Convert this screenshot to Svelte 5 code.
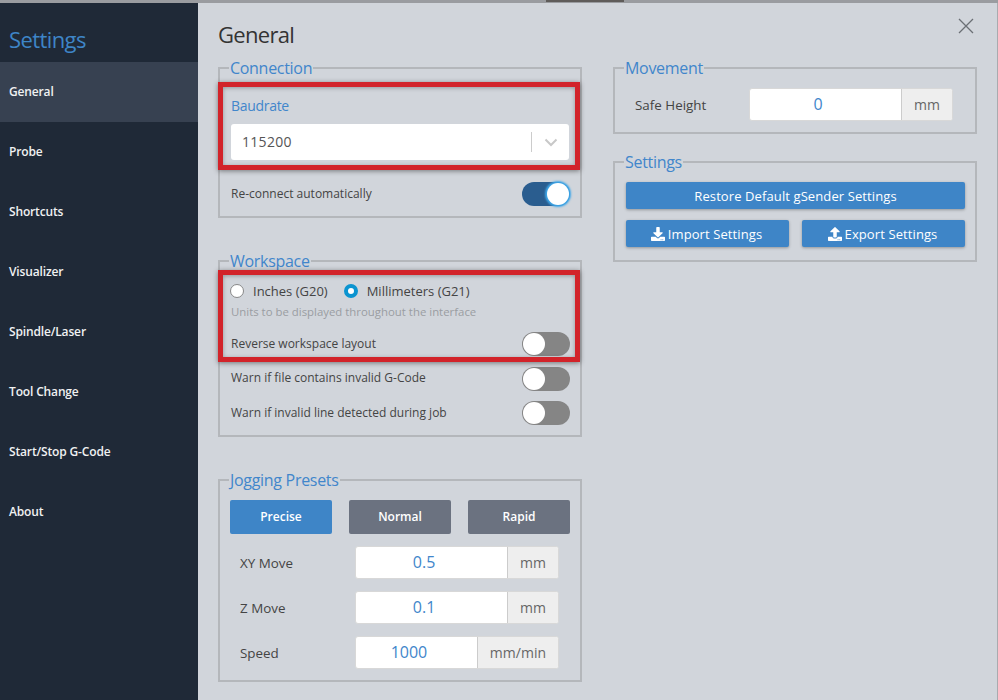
<script lang="ts">
	const navItems = ['General', 'Probe', 'Shortcuts', 'Visualizer', 'Spindle/Laser', 'Tool Change', 'Start/Stop G-Code', 'About'];
	const jogRows = [
		{ label: 'XY Move', value: '0.5', unit: 'mm' },
		{ label: 'Z Move', value: '0.1', unit: 'mm' },
		{ label: 'Speed', value: '1000', unit: 'mm/min' }
	];
</script>

<div class="modal">
	<div class="topstrip"></div>
	<div class="body">
		<nav class="sidebar">
			<h1 class="brand">Settings</h1>
			{#each navItems as item, i}
				<div class="nav-item" class:active={i === 0}>{item}</div>
			{/each}
		</nav>

		<main class="content">
			<button class="close" aria-label="Close">
				<svg width="16" height="16" viewBox="0 0 16 16"><path d="M1 1 L15 15 M15 1 L1 15" stroke="#6b6f75" stroke-width="1.3" fill="none" /></svg>
			</button>
			<h2 class="page-title">General</h2>

			<div class="columns">
				<div class="col">
					<fieldset class="connection">
						<legend>Connection</legend>
						<div class="field-label">Baudrate</div>
						<div class="select">
							<span>115200</span>
							<span class="sep"></span>
							<svg class="chev" width="14" height="9" viewBox="0 0 14 9"><path d="M1.5 1.5 L7 7 L12.5 1.5" stroke="#c8c8c8" stroke-width="2" fill="none" /></svg>
						</div>
						<div class="row reconnect">
							<span>Re-connect automatically</span>
							<span class="toggle on"><span class="knob"></span></span>
						</div>
						<div class="callout"></div>
					</fieldset>

					<fieldset class="workspace">
						<legend>Workspace</legend>
						<div class="radios">
							<span class="radio"></span><span class="radio-label">Inches (G20)</span>
							<span class="radio checked"></span><span class="radio-label">Millimeters (G21)</span>
						</div>
						<div class="hint">Units to be displayed throughout the interface</div>
						<div class="row"><span>Reverse workspace layout</span><span class="toggle"><span class="knob"></span></span></div>
						<div class="row"><span>Warn if file contains invalid G-Code</span><span class="toggle"><span class="knob"></span></span></div>
						<div class="row"><span>Warn if invalid line detected during job</span><span class="toggle"><span class="knob"></span></span></div>
						<div class="callout"></div>
					</fieldset>

					<fieldset class="jogging">
						<legend>Jogging Presets</legend>
						<div class="presets">
							<button class="preset selected">Precise</button>
							<button class="preset">Normal</button>
							<button class="preset">Rapid</button>
						</div>
						{#each jogRows as row}
							<div class="input-row">
								<span class="input-label">{row.label}</span>
								<div class="input-group">
									<span class="input-value">{row.value}</span>
									<span class="unit">{row.unit}</span>
								</div>
							</div>
						{/each}
					</fieldset>
				</div>

				<div class="col">
					<fieldset class="movement">
						<legend>Movement</legend>
						<div class="input-row">
							<span class="input-label">Safe Height</span>
							<div class="input-group">
								<span class="input-value">0</span>
								<span class="unit">mm</span>
							</div>
						</div>
					</fieldset>

					<fieldset class="settings">
						<legend>Settings</legend>
						<button class="action">Restore Default gSender Settings</button>
						<div class="action-row">
							<button class="action">
								<svg width="14" height="14" viewBox="0 0 512 512"><path fill="#fff" d="M216 0h80c13.3 0 24 10.7 24 24v168h87.7c17.8 0 26.7 21.5 14.1 34.1L269.7 378.3c-7.5 7.5-19.8 7.5-27.3 0L90.1 226.1c-12.6-12.6-3.7-34.1 14.1-34.1H192V24c0-13.3 10.7-24 24-24zm296 376v112c0 13.3-10.7 24-24 24H24c-13.3 0-24-10.7-24-24V376c0-13.3 10.7-24 24-24h146.7l49 49c20.1 20.1 52.5 20.1 72.6 0l49-49H488c13.3 0 24 10.7 24 24zm-124 88c0-11-9-20-20-20s-20 9-20 20 9 20 20 20 20-9 20-20zm64 0c0-11-9-20-20-20s-20 9-20 20 9 20 20 20 20-9 20-20z" /></svg>
								Import Settings
							</button>
							<button class="action">
								<svg width="14" height="14" viewBox="0 0 512 512"><path fill="#fff" d="M296 384h-80c-13.3 0-24-10.7-24-24V192h-87.7c-17.8 0-26.7-21.5-14.1-34.1L242.3 5.7c7.5-7.5 19.8-7.5 27.3 0l152.2 152.2c12.6 12.6 3.7 34.1-14.1 34.1H320v168c0 13.3-10.7 24-24 24zm216-8v112c0 13.3-10.7 24-24 24H24c-13.3 0-24-10.7-24-24V376c0-13.3 10.7-24 24-24h136v8c0 30.9 25.1 56 56 56h80c30.9 0 56-25.1 56-56v-8h136c13.3 0 24 10.7 24 24zm-124 88c0-11-9-20-20-20s-20 9-20 20 9 20 20 20 20-9 20-20zm64 0c0-11-9-20-20-20s-20 9-20 20 9 20 20 20 20-9 20-20z" /></svg>
								Export Settings
							</button>
						</div>
					</fieldset>
				</div>
			</div>
		</main>
	</div>
</div>

<style>
	:global(body) {
		margin: 0;
		background: #d1d5db;
	}

	.modal {
		width: 998px;
		height: 700px;
		overflow: hidden;
		font-family: 'Open Sans', sans-serif;
		color: #444;
		display: flex;
		flex-direction: column;
	}

	/* what shows of the window behind the dialog */
	.topstrip {
		height: 3px;
		background:
			linear-gradient(to right, transparent 546px, #5f5c5a 546px, #5f5c5a 624px, transparent 624px) top / 100% 2px no-repeat,
			#9a9ca0;
	}

	.body {
		flex: 1;
		display: flex;
		min-height: 0;
	}

	.sidebar {
		width: 198px;
		flex-shrink: 0;
		background: #1f2937;
	}

	.brand {
		margin: 0;
		height: 59px;
		padding: 20px 0 0 9px;
		box-sizing: border-box;
		font-size: 22px;
		line-height: 32px;
		font-weight: 400;
		letter-spacing: -0.6px;
		color: #3e85c7;
	}

	.nav-item {
		height: 60px;
		line-height: 60px;
		padding-left: 9px;
		font-size: 12px;
		font-weight: 600;
		letter-spacing: -0.15px;
		color: #f0f1f2;
	}

	.nav-item.active {
		background: #374151;
	}

	.content {
		flex: 1;
		position: relative;
		padding: 0 20px;
		background: #d1d5db;
		border-right: 1px solid #a9abaf;
	}

	.close {
		position: absolute;
		top: 15px;
		right: 23px;
		padding: 0;
		border: none;
		background: none;
		line-height: 0;
	}

	.page-title {
		margin: 0;
		padding-top: 15px;
		font-size: 22px;
		line-height: 32px;
		font-weight: 400;
		letter-spacing: -0.7px;
		color: #333;
	}

	.columns {
		display: flex;
		gap: 31px;
		margin-top: 8px;
	}

	.col {
		width: 364px;
	}

	fieldset {
		position: relative;
		margin: 0;
		padding: 0 10px 0 11px;
		border: 2px solid #b4b7bb;
		min-width: 0;
		box-sizing: border-box;
	}

	legend {
		padding: 0 1px;
		margin-left: -2px;
		font-size: 16px;
		line-height: 20px;
		letter-spacing: -0.3px;
		color: #4186cb;
	}

	.connection {
		height: 160px;
	}

	.workspace {
		height: 186px;
		margin-top: 33px;
	}

	.jogging {
		height: 212px;
		margin-top: 33px;
	}

	.field-label {
		margin-top: 18px;
		font-size: 14px;
		line-height: 20px;
		letter-spacing: -0.3px;
		color: #4186cb;
	}

	.select {
		display: flex;
		align-items: center;
		height: 36px;
		margin: 8px 1px 0 0;
		background: #fff;
		border-radius: 3px;
		padding-left: 11px;
		font-size: 14px;
		color: #555;
		letter-spacing: 0.3px;
	}

	.select span:first-child {
		flex: 1;
		padding-bottom: 2px;
	}

	.sep {
		width: 1px;
		height: 20px;
		background: #ccc;
	}

	.chev {
		margin: 0 11px 0 12px;
	}

	.row {
		display: flex;
		align-items: center;
		justify-content: space-between;
		font-size: 12px;
		color: #444;
		height: 34.5px;
	}

	.row > span:first-child {
		padding-bottom: 2px;
	}

	.reconnect {
		margin-top: 19px;
		height: 30px;
	}

	.toggle {
		display: block;
		position: relative;
		width: 48px;
		height: 24px;
		border-radius: 12px;
		background: #858585;
		flex-shrink: 0;
	}

	.toggle.on {
		background: #2a5d8f;
	}

	.knob {
		position: absolute;
		top: 1px;
		left: 1px;
		width: 22px;
		height: 22px;
		border-radius: 50%;
		background: #fff;
	}

	.toggle.on .knob {
		left: 25px;
		box-shadow: 0 0 2px 2px #3ea6e8;
	}

	.radios {
		display: flex;
		align-items: center;
		margin: 8px 0 0 -1px;
		height: 24px;
		font-size: 13px;
	}

	.radio {
		width: 14px;
		height: 14px;
		box-sizing: border-box;
		border-radius: 50%;
		background: #fff;
		border: 1px solid #888;
	}

	.radio.checked {
		border: 4px solid #0b94d0;
	}

	.radio-label {
		margin: 0 16px 0 9px;
	}

	.hint {
		margin-top: 1px;
		font-size: 11.4px;
		line-height: 16px;
		color: #9a9da2;
	}

	.workspace .hint + .row {
		margin-top: 7px;
	}

	.callout {
		position: absolute;
		left: -2px;
		right: 0;
		box-sizing: border-box;
		border: 5px solid #d2232a;
		box-shadow: 0 1px 5px rgba(0, 0, 0, 0.45), inset 0 1px 4px rgba(0, 0, 0, 0.3);
		pointer-events: none;
	}

	.connection .callout {
		top: 4px;
		height: 88px;
	}

	.workspace .callout {
		top: -1px;
		height: 92px;
	}

	.presets {
		display: flex;
		justify-content: space-between;
		margin: 10px 0 0 -1px;
	}

	.preset {
		width: 102px;
		height: 34px;
		padding: 0 0 2px;
		border: none;
		border-radius: 2px;
		background: #6b7280;
		color: #fff;
		font-family: inherit;
		font-size: 12px;
		font-weight: 600;
	}

	.preset.selected {
		background: #3e85c7;
	}

	.input-row {
		display: flex;
		align-items: center;
		height: 33px;
		margin-top: 12px;
		padding-left: 9px;
		font-size: 13.4px;
	}

	.input-label {
		width: 115px;
	}

	.movement .input-label {
		width: 114px;
	}

	.input-group {
		flex: none;
		width: 204px;
		height: 33px;
		display: flex;
		border-radius: 3px;
		overflow: hidden;
		background: #fff;
		border: 1px solid #d8d8d8;
		box-sizing: border-box;
	}

	.input-value {
		flex: 1;
		padding-right: 15px;
		text-align: center;
		line-height: 31px;
		font-size: 16px;
		color: #4186cb;
	}

	.unit {
		padding: 0 12px;
		line-height: 31px;
		text-align: center;
		font-size: 14px;
		color: #666;
		background: #eee;
		border-left: 1px solid #ccc;
	}

	.movement {
		height: 76px;
	}

	.movement .input-row {
		margin-top: 10px;
	}

	.settings {
		height: 110px;
		margin-top: 18px;
	}

	.action {
		display: flex;
		align-items: center;
		justify-content: center;
		gap: 3px;
		width: 100%;
		height: 27px;
		margin-top: 10px;
		padding: 0;
		border: none;
		border-radius: 2px;
		background: #3e85c7;
		color: #fff;
		font-family: inherit;
		font-size: 13px;
		font-weight: 500;
		letter-spacing: 0.1px;
		box-shadow: 0 1px 3px rgba(0, 0, 0, 0.3);
	}

	.action-row {
		display: flex;
		gap: 13px;
		margin-top: 11px;
	}

	.action-row .action {
		margin-top: 0;
		padding-right: 2px;
	}
</style>
